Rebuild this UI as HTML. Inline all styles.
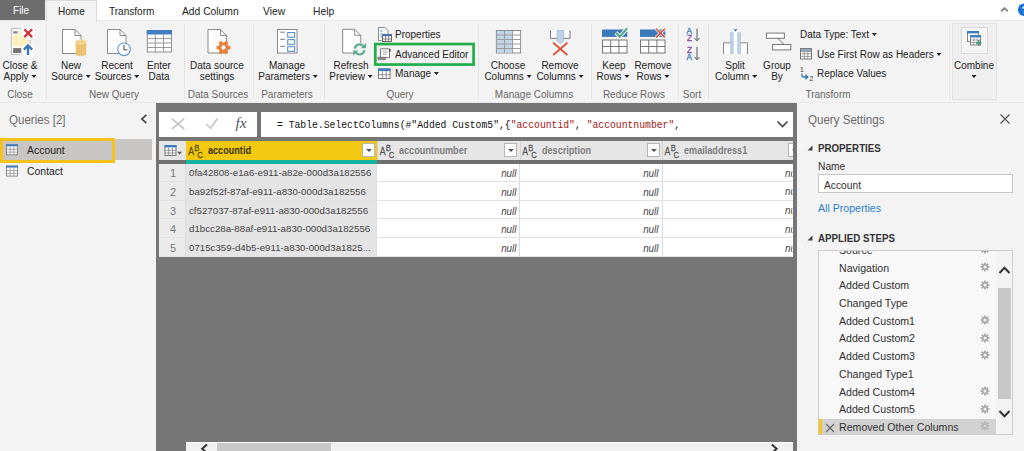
<!DOCTYPE html>
<html>
<head>
<meta charset="utf-8">
<style>
*{box-sizing:border-box;margin:0;padding:0}
html,body{width:1024px;height:451px;overflow:hidden;background:#fff}
body{font-family:"Liberation Sans",sans-serif;font-size:11px;color:#333;position:relative}
.a{position:absolute}
.t{position:absolute;white-space:nowrap;line-height:12px}
.c{text-align:center}
/* tabs */
#tabs{left:0;top:0;width:1024px;height:20px;background:#fff}
#file{left:0;top:0;width:45px;height:20px;background:#6d6d6d;color:#fff;text-align:center;line-height:21px;font-size:11px}
#home{left:46px;top:0;width:51px;height:22px;background:#f3f3f3;border:1px solid #dcdcdc;border-bottom:none;text-align:center;line-height:21px;font-size:11px;color:#222}
.tab{transform:scaleX(.999);transform-origin:left center;top:5.6px;font-size:10.05px;color:#222}
/* ribbon */
#ribbon{left:0;top:20px;width:1024px;height:82px;background:#f3f3f3;border-top:1px solid #e6e6e6}
.sep{position:absolute;top:24px;width:1px;height:75px;background:#e4e4e4}
.lbl{transform:scaleX(.999);position:absolute;white-space:nowrap;font-size:10px;line-height:12px;color:#222;text-align:center}
.grp{transform:scaleX(.999);position:absolute;white-space:nowrap;font-size:10px;line-height:12px;color:#666;text-align:center;top:89.3px}
.dd{display:inline-block;width:5px;height:3px;background:#222;clip-path:polygon(0 0,100% 0,50% 100%);vertical-align:middle;margin-left:2.8px;position:relative;top:-.8px}
/* panels */
#below{left:0;top:101px;width:1024px;height:350px;background:#f3f3f3}
#main{left:156px;top:103px;width:641px;height:348px;background:#767676}

/* left panel */
.ptitle{font-size:12px;color:#6a6a6a;line-height:14px;transform:scaleX(.964);transform-origin:left center}
.q{font-size:10.45px;color:#222;transform:scaleX(.999);transform-origin:left center}
/* grid */
.hd{position:absolute;top:141px;height:19px;background:#e6e6e6}
.hb{position:absolute;top:160px;height:4px;background:#707070}
.ht{position:absolute;top:145px;font-size:10px;line-height:12px;font-weight:bold;color:#7d7d7d;white-space:nowrap;transform:scaleX(.91);transform-origin:left center}
.ddb{position:absolute;top:143px;width:13px;height:14px;background:#fff;border:1px solid #b5b5b5}
.ddb:after{content:"";position:absolute;left:3px;top:5px;border-left:3px solid transparent;border-right:3px solid transparent;border-top:3px solid #555}
.abc{position:absolute;top:142px;width:16px;height:16px}
.row{position:absolute;left:159px;width:634px;background:#fff;border-bottom:1px solid #e2e2e2}
.cell{position:absolute;top:0;bottom:0;border-right:1px solid #dcdcdc}
.nul{position:absolute;font-style:italic;font-size:10.5px;line-height:12px;color:#444;transform:scaleX(.93);transform-origin:right center}
.gid{position:absolute;font-size:9.72px;line-height:12px;color:#444;white-space:nowrap;transform:scaleX(.999);transform-origin:left center}
.rn{position:absolute;font-size:11px;line-height:12px;color:#777;width:26px;text-align:center;left:160px}
/* right */
.h2{font-size:11px;font-weight:bold;color:#333;line-height:14px;transform:scaleX(.886);transform-origin:left center}
.st{font-size:10.4px;color:#303030;line-height:12px;transform:scaleX(.985);transform-origin:left center}
.s2{transform:scaleX(1.02)}
</style>
</head>
<body>
<div id="tabs" class="a"></div>
<div class="a" style="left:0;top:0;width:47px;height:22px;background:#f3f3f3"></div><div id="file" class="a"></div><div class="t tab" style="left:12.7px;color:#fff;top:4.6px">File</div>
<div id="ribbon" class="a"></div>
<div id="home" class="a"></div><div class="t tab" style="left:58.2px">Home</div>
<div class="t tab" style="left:109px">Transform</div>
<div class="t tab" style="left:182px;font-size:10.3px">Add Column</div>
<div class="t tab" style="left:263px;font-size:10.3px">View</div>
<div class="t tab" style="left:313px;font-size:10.3px">Help</div>


<!-- ===== RIBBON CONTENT ===== -->
<div class="sep" style="left:46px"></div>
<div class="sep" style="left:184px"></div>
<div class="sep" style="left:253px"></div>
<div class="sep" style="left:324px"></div>
<div class="sep" style="left:478px"></div>
<div class="sep" style="left:591px"></div>
<div class="sep" style="left:678px"></div>
<div class="sep" style="left:708px"></div>
<div class="sep" style="left:949px"></div>

<!-- Close & Apply -->
<div class="lbl" style="left:-10px;width:60px;top:60.2px">Close &amp;</div>
<div class="lbl" style="left:-10px;width:60px;top:71px">Apply<i class="dd"></i></div>
<div class="grp" style="left:-10px;width:60px">Close</div>
<!-- New Source -->
<div class="lbl" style="left:41px;width:60px;top:60.2px">New</div>
<div class="lbl" style="left:41px;width:60px;top:71px">Source<i class="dd"></i></div>
<!-- Recent Sources -->
<div class="lbl" style="left:87px;width:60px;top:60.2px">Recent</div>
<div class="lbl" style="left:87px;width:60px;top:71px">Sources<i class="dd"></i></div>
<!-- Enter Data -->
<div class="lbl" style="left:129px;width:60px;top:60.2px">Enter</div>
<div class="lbl" style="left:129px;width:60px;top:71px">Data</div>
<div class="grp" style="left:74px;width:80px">New Query</div>
<!-- Data source settings -->
<div class="lbl" style="left:177px;width:80px;top:60.2px">Data source</div>
<div class="lbl" style="left:177px;width:80px;top:71px">settings</div>
<div class="grp" style="left:178px;width:80px">Data Sources</div>
<!-- Manage Parameters -->
<div class="lbl" style="left:247px;width:80px;top:60.2px">Manage</div>
<div class="lbl" style="left:248px;width:80px;top:71px">Parameters<i class="dd"></i></div>
<div class="grp" style="left:247px;width:80px">Parameters</div>
<!-- Refresh Preview -->
<div class="lbl" style="left:321px;width:60px;top:60.2px">Refresh</div>
<div class="lbl" style="left:321px;width:60px;top:71px">Preview<i class="dd"></i></div>
<!-- Query small buttons -->
<div class="lbl" style="left:395px;top:29px;text-align:left">Properties</div>
<svg class="a" style="left:370px;top:40px" width="110" height="30" viewBox="370 40 110 30"><rect x="375.3" y="44.05" width="98.3" height="20.5" fill="none" stroke="#22ad4a" stroke-width="2.7"/></svg>
<div class="lbl" style="left:395px;top:49px;text-align:left">Advanced Editor</div>
<div class="lbl" style="left:395px;top:68px;text-align:left">Manage<i class="dd"></i></div>
<div class="grp" style="left:360px;width:80px">Query</div>
<!-- Choose Columns -->
<div class="lbl" style="left:478px;width:60px;top:60.2px">Choose</div>
<div class="lbl" style="left:478px;width:60px;top:71px">Columns<i class="dd"></i></div>
<div class="lbl" style="left:530px;width:60px;top:60.2px">Remove</div>
<div class="lbl" style="left:530px;width:60px;top:71px">Columns<i class="dd"></i></div>
<div class="grp" style="left:484px;width:100px">Manage Columns</div>
<!-- Keep / Remove Rows -->
<div class="lbl" style="left:584px;width:60px;top:60.2px">Keep</div>
<div class="lbl" style="left:583px;width:60px;top:71px">Rows<i class="dd"></i></div>
<div class="lbl" style="left:623px;width:60px;top:60.2px">Remove</div>
<div class="lbl" style="left:623px;width:60px;top:71px">Rows<i class="dd"></i></div>
<div class="grp" style="left:594px;width:80px">Reduce Rows</div>
<!-- Sort -->
<div class="grp" style="left:672px;width:40px">Sort</div>
<!-- Split / Group -->
<div class="lbl" style="left:705px;width:60px;top:60.2px">Split</div>
<div class="lbl" style="left:706px;width:60px;top:71px">Column<i class="dd"></i></div>
<div class="lbl" style="left:747px;width:60px;top:60.2px">Group</div>
<div class="lbl" style="left:747px;width:60px;top:71px">By</div>
<div class="lbl" style="left:800px;top:29px;text-align:left">Data Type: Text<i class="dd"></i></div>
<div class="lbl" style="left:817px;top:49px;text-align:left">Use First Row as Headers<i class="dd"></i></div>
<div class="lbl" style="left:817px;top:68px;text-align:left">Replace Values</div>
<div class="grp" style="left:788px;width:80px">Transform</div>
<!-- Combine -->
<div class="a" style="left:952px;top:23px;width:45px;height:77px;background:#efefef;border:1px solid #e2e2e2"></div>
<div class="a" style="left:961px;top:27px;width:27px;height:27px;background:#f5f5f5;border:1px solid #dadada"></div>
<div class="lbl" style="left:944px;width:60px;top:60.2px">Combine</div>
<div class="lbl" style="left:944px;width:60px;top:71px"><i class="dd" style="margin-left:0"></i></div>

<svg class="a" style="left:0;top:0" width="1024" height="110" viewBox="0 0 1024 110">
<g>
<rect x="11.5" y="28.5" width="10" height="26" fill="#fff"/>
<rect x="22" y="28" width="11.5" height="10.5" fill="#fff" opacity=".65"/><rect x="22" y="44" width="11.5" height="11" fill="#fff" opacity=".65"/>
<path d="M21.3 28.4 H11.4 V54.6 H21.3" fill="none" stroke="#b3b3b3" stroke-width=".9"/>
<rect x="13.1" y="34.9" width="5.1" height="11.7" fill="#fdeeb4"/>
<path d="M18.9 31.2 H21.6 V37.2 L29.1 40.2 V42.1 L21.6 46.6 H18.9 Z" fill="#fdf0bd"/>
<rect x="13.1" y="31.2" width="4.7" height="2.4" fill="#8c8c8c"/>
<rect x="13.1" y="48.1" width="8.1" height="4.9" fill="#757575"/>
<path d="M30.2 40.2 V43.6" stroke="#9a9a9a" stroke-width=".7"/>
<path d="M24.3 29.3 L32.1 37.1 M32.1 29.3 L24.3 37.1" stroke="#cb3234" stroke-width="2.3" fill="none"/>
<path d="M28 54.9 V46 M23.9 49.6 L28 45.4 L32.1 49.6" stroke="#3977b6" stroke-width="2.3" fill="none"/>
</g>
<path d="M62.5 29.5 H75.0 L81.0 35.5 V53.5 H62.5 Z" fill="#fff" stroke="#8a8a8a" stroke-width="1"/><path d="M75.0 29.5 V35.5 H81.0" fill="none" stroke="#8a8a8a" stroke-width="1"/><g><rect x="75.6" y="41.8" width="10.6" height="12.6" fill="#ecc271"/><ellipse cx="80.9" cy="41.8" rx="5.3" ry="2" fill="#f1cf8a" stroke="#f6e0b0" stroke-width=".8"/><ellipse cx="80.9" cy="54.2" rx="5.3" ry="1.5" fill="#ecc271"/></g>
<path d="M107.5 29.5 H120.0 L126.0 35.5 V53.5 H107.5 Z" fill="#fff" stroke="#8a8a8a" stroke-width="1"/><path d="M120.0 29.5 V35.5 H126.0" fill="none" stroke="#8a8a8a" stroke-width="1"/><g><circle cx="124" cy="49.3" r="6.3" fill="#fff" stroke="#6b98cf" stroke-width="1.1"/><path d="M124 45 V49.8 H127.5" stroke="#555" stroke-width="1.1" fill="none"/></g>
<g><rect x="147.3" y="30.5" width="24.2" height="21.5" fill="#fff" stroke="#8f8f8f" stroke-width="1"/><rect x="146.8" y="30" width="25.2" height="4.5" fill="#427fc2"/>
<path d="M147.3 38.6 H171.5 M147.3 43 H171.5 M147.3 47.5 H171.5 M155.3 34 V52 M163.5 34 V52" stroke="#9a9a9a" stroke-width="1" fill="none"/></g>
<path d="M208 29.5 H220.5 L226.5 35.5 V53.0 H208 Z" fill="#fff" stroke="#8a8a8a" stroke-width="1"/><path d="M220.5 29.5 V35.5 H226.5" fill="none" stroke="#8a8a8a" stroke-width="1"/><g transform="translate(223.5 47.6) rotate(90) scale(.97)"><g fill="#e6813a">
<rect x="-1.8" y="-7.2" width="3.6" height="14.4"/><rect x="-1.8" y="-7.2" width="3.6" height="14.4" transform="rotate(60)"/><rect x="-1.8" y="-7.2" width="3.6" height="14.4" transform="rotate(120)"/>
<circle r="5.2"/></g><circle r="2.3" fill="#f3f3f3"/></g>
<g><rect x="277.5" y="29.5" width="19.5" height="23.5" fill="#fff" stroke="#8a8a8a"/>
<g fill="#fff" stroke="#4b86c6" stroke-width="1"><rect x="287.7" y="32.6" width="7" height="4.6"/><rect x="287.7" y="39.7" width="7" height="4.6"/><rect x="287.7" y="46.7" width="7" height="4.6"/></g>
<path d="M280.3 32.2 H284.8 M280.3 39.3 H284.8 M280.3 46.4 H284.8" stroke="#777" stroke-width="1"/></g>
<path d="M342.7 29.3 H354.7 L360.7 35.3 V53 H342.7 Z" fill="#fff" stroke="#8a8a8a" stroke-width="1"/><path d="M354.7 29.3 V35.3 H360.7" fill="none" stroke="#8a8a8a" stroke-width="1"/>
<circle cx="359.6" cy="49.4" r="6.6" fill="#f3f3f3"/>
<g fill="none" stroke="#5cab8c" stroke-width="2.1"><path d="M354.9 48.6 A4.7 4.7 0 0 1 363.3 46.2"/><path d="M364.3 50.2 A4.7 4.7 0 0 1 355.9 52.6"/></g>
<path d="M366 43 V48.2 H360.8 Z" fill="#5cab8c"/><path d="M353.2 55.8 V50.6 H358.4 Z" fill="#5cab8c"/>
<g><path d="M378.5 27.5 H385 L388 30.5 V34 M378.5 27.5 V40.5 H381.5" fill="#fff" stroke="#8a8a8a" stroke-width="1"/>
<path d="M380.5 31 H382 M380.5 34 H382 M380.5 37 H382" stroke="#4b86c6" stroke-width="1.2"/>
<rect x="382.5" y="34.5" width="9" height="7" fill="#fff" stroke="#6b6b6b" stroke-width="1"/><rect x="382" y="34" width="10" height="2.2" fill="#4b6fa8"/>
<path d="M385.5 36 V41.5 M388.5 36 V41.5 M382.5 39 H391.5" stroke="#6b6b6b" stroke-width=".8"/></g>
<g><path d="M380.5 48.8 H389.5 V57.6 H380.5 Z" fill="#fff" stroke="#7a7a7a" stroke-width="1"/>
<path d="M377.8 57.2 H385.4 V59.7 H378.6 Q377.6 59.5 377.8 57.2 Z" fill="#8c8c8c" stroke="#6f6f6f" stroke-width=".7"/>
<path d="M382.6 51 H387.6 M382.6 52.8 H387.6 M382.6 54.6 H386.4" stroke="#b0b0b0" stroke-width=".9"/><rect x="389" y="49.2" width="1.7" height="2.2" fill="#444"/></g>
<g><rect x="378.5" y="69" width="11.5" height="9.5" fill="#fff" stroke="#777" stroke-width="1"/><rect x="378" y="68.5" width="12.5" height="2.6" fill="#3d7dc0"/>
<path d="M382.3 71 V78.5 M386.2 71 V78.5 M378.5 74.7 H390" stroke="#888" stroke-width=".9"/></g>
<g><rect x="496.4" y="30.5" width="24.2" height="22.5" fill="#fff" stroke="#8a8a8a"/><rect x="496.9" y="31" width="15.6" height="21.5" fill="#c3d5eb"/>
<path d="M496.4 35 H520.6 M496.4 39.5 H520.6 M496.4 44 H520.6 M496.4 48.5 H520.6 M504.5 30.5 V53 M512.5 30.5 V53" stroke="#9a9a9a" stroke-width="1" fill="none"/></g>
<g><path d="M550.5 30.5 H557 V38.4 H550.5 Z M563.9 30.5 H570 V38.4 H563.9 Z" fill="#fff" stroke="none"/>
<path d="M550.5 30.5 V38.4 H557 M563.9 38.4 H570 V30.5" fill="none" stroke="#777" stroke-width="1"/>
<path d="M557 30.5 H563.9 V40.5 L560.4 43.6 L557 40.5 Z" fill="#bed1e9" stroke="#9db5d3" stroke-width=".7"/>
<path d="M553.2 42.8 L567.4 55 M567.4 42.8 L553.2 55" stroke="#d9553a" stroke-width="1.8" fill="none"/></g>
<g><rect x="602" y="29.5" width="25.3" height="7.4" fill="#3b79b9"/><rect x="602.5" y="40" width="24.5" height="13" fill="#fff" stroke="#777" stroke-width="1"/><path d="M602.5 46.5 H627.0 M610.7 40 V53 M618.9 40 V53" stroke="#777" stroke-width="1" fill="none"/><path d="M615.8 32.6 L619.8 36.7 L627.3 28.2" stroke="#fff" stroke-width="3.8" fill="none"/><path d="M615.8 32.6 L619.8 36.7 L627.3 28.2" stroke="#4ea58a" stroke-width="2" fill="none"/></g>
<g><rect x="640" y="29.5" width="25.3" height="7.4" fill="#3b79b9"/><rect x="640.5" y="40" width="24.5" height="13" fill="#fff" stroke="#777" stroke-width="1"/><path d="M640.5 46.5 H665.0 M648.7 40 V53 M656.9 40 V53" stroke="#777" stroke-width="1" fill="none"/><path d="M656 28.8 L664.8 37.4 M664.8 28.8 L656 37.4" stroke="#fff" stroke-width="3.2" fill="none" opacity=".8"/><path d="M656 28.8 L664.8 37.4 M664.8 28.8 L656 37.4" stroke="#d4573c" stroke-width="1.6" fill="none"/></g>
<g font-family="Liberation Sans" font-size="8.3" stroke-width=".3"><text x="686.6" y="34" fill="#3b79b9" stroke="#3b79b9">A</text><text x="686.9" y="41.2" fill="#8b4fa8" stroke="#8b4fa8">Z</text>
<text x="686.9" y="53.2" fill="#8b4fa8" stroke="#8b4fa8">Z</text><text x="686.6" y="60.3" fill="#3b79b9" stroke="#3b79b9">A</text></g>
<path d="M697 28.5 V40.5 M694.5 38 L697 40.8 L699.5 38" stroke="#555" stroke-width="1" fill="none"/>
<path d="M697 47 V59.5 M694.5 57 L697 59.8 L699.5 57" stroke="#555" stroke-width="1" fill="none"/>
<g><path d="M723.5 54 V42.8 H730.5 V54 Z M740.5 54 V42.8 H747.5 V54 Z" fill="#fff"/>
<rect x="730.6" y="32.3" width="3.3" height="21.7" fill="#bdd1ea"/><rect x="733.9" y="32.3" width="3.2" height="21.7" fill="#fff"/><rect x="737.1" y="32.3" width="3.4" height="21.7" fill="#bdd1ea"/>
<path d="M723.5 54 V42.8 H730.5 M740.5 42.8 H747.5 V54" fill="none" stroke="#858585" stroke-width="1"/>
<path d="M730.6 54 V32.3 M740.5 54 V32.3" fill="none" stroke="#a9b9cf" stroke-width=".6"/>
<path d="M733.3 29.2 H737.6 L735.45 31.5 Z" fill="#3b79b9"/></g>
<g fill="#fff" stroke="#777" stroke-width="1"><rect x="766.4" y="33.1" width="18" height="5.2"/><rect x="772.6" y="44.5" width="18.2" height="5.4"/><path d="M777.6 38.3 L784.2 44.5" fill="none"/></g>
<g><rect x="800.5" y="48.6" width="11" height="10.4" fill="#fff" stroke="#777" stroke-width="1"/><rect x="800.5" y="48.6" width="11" height="2.6" fill="#8fa9c9" stroke="#777" stroke-width=".8"/>
<path d="M804.2 51 V59 M807.8 51 V59 M800.5 53.7 H811.5 M800.5 56.4 H811.5" stroke="#888" stroke-width=".8"/></g>
<g font-family="Liberation Sans" font-size="7.6" fill="#444"><text x="799.8" y="72.2">1</text><text x="809.3" y="80.6">2</text></g>
<path d="M801.8 73.4 Q801.8 77 804 77 H807.6 M805.4 74.8 L807.8 77 L805.4 79.2" stroke="#2f75b5" stroke-width="1.3" fill="none"/>
<g><rect x="967.5" y="31.5" width="11" height="10" fill="#fff" stroke="#777" stroke-width=".9"/><rect x="967.1" y="31" width="11.8" height="2.4" fill="#3d7dc0"/>
<rect x="970.5" y="35.5" width="10" height="9.5" fill="#fff" stroke="#777" stroke-width=".9"/><rect x="970.1" y="35" width="10.8" height="2.4" fill="#3d7dc0"/>
<path d="M973.8 37.4 V45 M977.2 37.4 V45 M970.5 40 H980.5 M970.5 42.5 H980.5" stroke="#888" stroke-width=".7"/>
<path d="M978.7 40.1 V45.5 M976 42.8 H981.4" stroke="#3f9e7a" stroke-width="1.7"/></g>
<path d="M1001.2 11.4 L1004.5 8 L1007.8 11.4" fill="none" stroke="#858585" stroke-width="1.9"/><circle cx="1024.2" cy="9.8" r="6.3" fill="#1b72cf"/><text x="1021.4" y="13.8" font-family="Liberation Sans" font-weight="bold" font-size="11" fill="#fff">?</text>
</svg>
<div id="below" class="a"></div>
<div class="a" style="left:0;top:102px;width:1024px;height:1px;background:#e9e9e9"></div>
<div id="main" class="a"></div>


<!-- ===== LEFT PANEL ===== -->
<div class="t ptitle" style="left:9px;top:113px">Queries [2]</div>
<svg class="a" style="left:139px;top:112px" width="10" height="14" viewBox="0 0 10 14"><path d="M7.3 2.8 L2.9 7 L7.3 11.2" fill="none" stroke="#484848" stroke-width="1.7"/></svg>
<div class="a" style="left:0;top:139px;width:152px;height:21px;background:#c8c6c4"></div>
<div class="a" style="left:0;top:138px;width:115px;height:25px;border:3px solid #f8c21c;border-left-width:3px;background:#c8c6c4"></div>
<div class="t q" style="left:27px;top:145px">Account</div>
<div class="t q" style="left:27px;top:166px">Contact</div>

<!-- ===== MAIN ===== -->
<div class="a" style="left:159px;top:112px;width:98px;height:25px;background:#fff"></div>
<div class="a" style="left:261px;top:112px;width:532px;height:25px;background:#fff"></div>
<div class="t" style="left:277px;top:120px;font-family:'Liberation Mono',monospace;font-size:9.74px;color:#111;transform:scaleY(1.17);transform-origin:left center">= Table.SelectColumns(#"Added Custom5",{<span style="color:#a31515">"accountid"</span>, <span style="color:#a31515">"accountnumber"</span>,</div>
<svg class="a" style="left:776px;top:120px" width="13" height="9" viewBox="0 0 13 9"><path d="M1.5 1.5 L6.5 6.5 L11.5 1.5" fill="none" stroke="#444" stroke-width="1.6"/></svg>

<!-- header -->
<div class="hd" style="left:159px;width:634px"></div>
<div class="hb" style="left:159px;width:634px"></div>
<div class="hd" style="left:186px;width:191px;background:#f2c811"></div>
<div class="hb" style="left:186px;width:191px;background:#15b3a0"></div>
<div class="a" style="left:377px;top:141px;width:1px;height:19px;background:#cfcfcf"></div>
<div class="a" style="left:519.5px;top:141px;width:1px;height:19px;background:#d4d4d4"></div>
<div class="a" style="left:662px;top:141px;width:1px;height:19px;background:#d4d4d4"></div>
<div class="ht" style="left:207.7px;color:#3a3204">accountid</div>
<div class="ht" style="left:399px">accountnumber</div>
<div class="ht" style="left:541.7px">description</div>
<div class="ht" style="left:684px">emailaddress1</div>
<div class="ddb" style="left:362px"></div>
<div class="ddb" style="left:504px"></div>
<div class="ddb" style="left:646.5px"></div>
<div class="ddb" style="left:788px;width:5px;border-right:none;overflow:hidden"></div>
<!-- rows -->
<div class="row" style="top:164px;height:18px"><div class="cell" style="left:0;width:27px;background:#ebebeb"></div><div class="cell" style="left:27px;width:191px;background:#e4e4e4"></div><div class="cell" style="left:218px;width:143px"></div><div class="cell" style="left:361px;width:143px"></div></div>
<div class="rn" style="top:167px">1</div><div class="gid" style="left:189px;top:167px">0fa42808-e1a6-e911-a82e-000d3a182556</div><div class="nul" style="right:507.5px;top:167px">null</div><div class="nul" style="right:365.5px;top:167px">null</div><div class="nul" style="left:785px;top:167px;transform-origin:left center;width:8px;overflow:hidden">null</div>
<div class="row" style="top:182px;height:19px"><div class="cell" style="left:0;width:27px;background:#ebebeb"></div><div class="cell" style="left:27px;width:191px;background:#e4e4e4"></div><div class="cell" style="left:218px;width:143px"></div><div class="cell" style="left:361px;width:143px"></div></div>
<div class="rn" style="top:185.6px">2</div><div class="gid" style="left:189px;top:185.6px">ba92f52f-87af-e911-a830-000d3a182556</div><div class="nul" style="right:507.5px;top:185.6px">null</div><div class="nul" style="right:365.5px;top:185.6px">null</div><div class="nul" style="left:785px;top:185px;transform-origin:left center;width:8px;overflow:hidden">null</div>
<div class="row" style="top:201px;height:18px"><div class="cell" style="left:0;width:27px;background:#ebebeb"></div><div class="cell" style="left:27px;width:191px;background:#e4e4e4"></div><div class="cell" style="left:218px;width:143px"></div><div class="cell" style="left:361px;width:143px"></div></div>
<div class="rn" style="top:204.5px">3</div><div class="gid" style="left:189px;top:204.5px">cf527037-87af-e911-a830-000d3a182556</div><div class="nul" style="right:507.5px;top:204.5px">null</div><div class="nul" style="right:365.5px;top:204.5px">null</div><div class="nul" style="left:785px;top:204px;transform-origin:left center;width:8px;overflow:hidden">null</div>
<div class="row" style="top:219px;height:19px"><div class="cell" style="left:0;width:27px;background:#ebebeb"></div><div class="cell" style="left:27px;width:191px;background:#e4e4e4"></div><div class="cell" style="left:218px;width:143px"></div><div class="cell" style="left:361px;width:143px"></div></div>
<div class="rn" style="top:223px">4</div><div class="gid" style="left:189px;top:223px">d1bcc28a-88af-e911-a830-000d3a182556</div><div class="nul" style="right:507.5px;top:223px">null</div><div class="nul" style="right:365.5px;top:223px">null</div><div class="nul" style="left:785px;top:223px;transform-origin:left center;width:8px;overflow:hidden">null</div>
<div class="row" style="top:238px;height:19px"><div class="cell" style="left:0;width:27px;background:#ebebeb"></div><div class="cell" style="left:27px;width:191px;background:#e4e4e4"></div><div class="cell" style="left:218px;width:143px"></div><div class="cell" style="left:361px;width:143px"></div></div>
<div class="rn" style="top:241.7px">5</div><div class="gid" style="left:189px;top:241.7px">0715c359-d4b5-e911-a830-000d3a1825...</div><div class="nul" style="right:507.5px;top:241.7px">null</div><div class="nul" style="right:365.5px;top:241.7px">null</div><div class="nul" style="left:785px;top:242px;transform-origin:left center;width:8px;overflow:hidden">null</div>

<svg class="a" style="left:0;top:101px" width="1024" height="350" viewBox="0 101 1024 350">
<rect x="6.5" y="144.8" width="11" height="10" fill="#fff" stroke="#8a8a8a" stroke-width="1"/><rect x="6" y="144.3" width="12" height="2" fill="#3d7dc0"/><path d="M10.2 146.3 V154.8 M13.9 146.3 V154.8 M6.5 149.3 H17.5 M6.5 152.10000000000002 H17.5" stroke="#9a9a9a" stroke-width=".9" fill="none"/><rect x="6.5" y="166.1" width="11" height="10" fill="#fff" stroke="#8a8a8a" stroke-width="1"/><rect x="6" y="165.6" width="12" height="2" fill="#3d7dc0"/><path d="M10.2 167.6 V176.1 M13.9 167.6 V176.1 M6.5 170.6 H17.5 M6.5 173.4 H17.5" stroke="#9a9a9a" stroke-width=".9" fill="none"/>
<path d="M171.8 118.6 L184.2 129 M184.2 118.6 L171.8 129" stroke="#c6c6c6" stroke-width="1.7" fill="none"/>
<path d="M206.2 124 L210.5 128.3 L217.5 118.5" stroke="#c6c6c6" stroke-width="1.7" fill="none"/>
<text x="235.5" y="128" font-family="Liberation Serif" font-style="italic" font-size="15.5" fill="#555">fx</text>
<rect x="165" y="145.5" width="11" height="10" fill="#fff" stroke="#777" stroke-width="1"/><rect x="164.5" y="145" width="12" height="2.4" fill="#3d7dc0"/><path d="M168.7 147.4 V155.5 M172.4 147.4 V155.5 M165 150.3 H176 M165 153 H176" stroke="#8a8a8a" stroke-width=".9" fill="none"/><path d="M177.2 151.8 H182 L179.6 154.6 Z" fill="#555"/>
<g font-family="Liberation Sans" fill="#5a4c05" stroke="#5a4c05" stroke-width=".25"><text transform="translate(188.2 155.1) scale(.82 1)" font-size="10.6">A</text><text transform="translate(194.3 151.1) scale(.8 1)" font-size="9.6">B</text><text transform="translate(197.2 158.2) scale(.8 1)" font-size="9.6">C</text></g><g font-family="Liberation Sans" fill="#555" stroke="#555" stroke-width=".25"><text transform="translate(379.7 155.1) scale(.82 1)" font-size="10.6">A</text><text transform="translate(385.8 151.1) scale(.8 1)" font-size="9.6">B</text><text transform="translate(388.7 158.2) scale(.8 1)" font-size="9.6">C</text></g><g font-family="Liberation Sans" fill="#555" stroke="#555" stroke-width=".25"><text transform="translate(522.2 155.1) scale(.82 1)" font-size="10.6">A</text><text transform="translate(528.3 151.1) scale(.8 1)" font-size="9.6">B</text><text transform="translate(531.2 158.2) scale(.8 1)" font-size="9.6">C</text></g><g font-family="Liberation Sans" fill="#555" stroke="#555" stroke-width=".25"><text transform="translate(664.6 155.1) scale(.82 1)" font-size="10.6">A</text><text transform="translate(670.7 151.1) scale(.8 1)" font-size="9.6">B</text><text transform="translate(673.6 158.2) scale(.8 1)" font-size="9.6">C</text></g>
</svg>
<!-- bottom scrollbar -->
<div class="a" style="left:186px;top:442px;width:607px;height:9px;background:#f1f1f1;border-top:1px solid #fafafa"></div>
<div class="a" style="left:217px;top:443px;width:114px;height:8px;background:#c8c8c8"></div>
<svg class="a" style="left:198px;top:442px" width="14" height="9" viewBox="198 442 14 9"><path d="M207 444.4 L202.2 448.8 L207 453.2" fill="none" stroke="#333" stroke-width="2"/></svg>
<svg class="a" style="left:768px;top:442px" width="14" height="9" viewBox="768 442 14 9"><path d="M771.8 444.4 L776.6 448.8 L771.8 453.2" fill="none" stroke="#333" stroke-width="2"/></svg>

<!-- ===== RIGHT PANEL ===== -->
<div class="t ptitle" style="left:808px;top:113px">Query Settings</div>
<svg class="a" style="left:999px;top:113px" width="12" height="12" viewBox="0 0 12 12"><path d="M1.5 1.5 L10.5 10.5 M10.5 1.5 L1.5 10.5" fill="none" stroke="#555" stroke-width="1.2"/></svg>
<svg class="a" style="left:807px;top:145px" width="6" height="6" viewBox="0 0 6 6"><path d="M5.5 0.5 L5.5 5.5 L0.5 5.5 Z" fill="#444"/></svg>
<div class="t h2" style="left:818px;top:141px">PROPERTIES</div>
<div class="t st" style="left:818px;top:161px">Name</div>
<div class="a" style="left:818px;top:174px;width:195px;height:19px;background:#fff;border:1px solid #c6c6c6"></div>
<div class="t st" style="left:824px;top:179.7px">Account</div>
<div class="t st" style="left:818px;top:203px;color:#2b80d0;transform:scaleX(1.02)">All Properties</div>
<svg class="a" style="left:807px;top:235px" width="6" height="6" viewBox="0 0 6 6"><path d="M5.5 0.5 L5.5 5.5 L0.5 5.5 Z" fill="#444"/></svg>
<div class="t h2" style="left:818px;top:231px">APPLIED STEPS</div>
<div class="a" style="left:818px;top:250px;width:195px;height:185px;background:#f8f8f8;border:1px solid #cdcdcd;overflow:hidden" id="steps"><div class="a" style="left:0;top:168px;width:177px;height:16px;background:#d2d2d2"></div><div class="a" style="left:0;top:168px;width:2.5px;height:16px;background:#f2c811"></div><svg class="a" style="left:6px;top:172px" width="10" height="10" viewBox="0 0 10 10"><path d="M1 1 L9 9 M9 1 L1 9" stroke="#666" stroke-width="1.2" fill="none"/></svg><div class="t st s2" style="left:20px;top:-6.4px">Source</div><svg class="a" style="left:160.5px;top:-7.1px" width="10" height="10" viewBox="-5 -5 10 10"><g stroke="#a3a3a3" fill="none"><circle r="2.3" stroke-width="1.5"/><path d="M0 -4.6V-3M0 3V4.6M-4.6 0H-3M3 0H4.6M-3.25 -3.25L-2.1 -2.1M2.1 2.1L3.25 3.25M3.25 -3.25L2.1 -2.1M-2.1 2.1L-3.25 3.25" stroke-width="1.7"/></g></svg><div class="t st s2" style="left:20px;top:11.6px">Navigation</div><svg class="a" style="left:160.5px;top:10.9px" width="10" height="10" viewBox="-5 -5 10 10"><g stroke="#a3a3a3" fill="none"><circle r="2.3" stroke-width="1.5"/><path d="M0 -4.6V-3M0 3V4.6M-4.6 0H-3M3 0H4.6M-3.25 -3.25L-2.1 -2.1M2.1 2.1L3.25 3.25M3.25 -3.25L2.1 -2.1M-2.1 2.1L-3.25 3.25" stroke-width="1.7"/></g></svg><div class="t st s2" style="left:20px;top:29.3px">Added Custom</div><svg class="a" style="left:160.5px;top:28.6px" width="10" height="10" viewBox="-5 -5 10 10"><g stroke="#a3a3a3" fill="none"><circle r="2.3" stroke-width="1.5"/><path d="M0 -4.6V-3M0 3V4.6M-4.6 0H-3M3 0H4.6M-3.25 -3.25L-2.1 -2.1M2.1 2.1L3.25 3.25M3.25 -3.25L2.1 -2.1M-2.1 2.1L-3.25 3.25" stroke-width="1.7"/></g></svg><div class="t st s2" style="left:20px;top:47px">Changed Type</div><div class="t st s2" style="left:20px;top:64.7px">Added Custom1</div><svg class="a" style="left:160.5px;top:64.0px" width="10" height="10" viewBox="-5 -5 10 10"><g stroke="#a3a3a3" fill="none"><circle r="2.3" stroke-width="1.5"/><path d="M0 -4.6V-3M0 3V4.6M-4.6 0H-3M3 0H4.6M-3.25 -3.25L-2.1 -2.1M2.1 2.1L3.25 3.25M3.25 -3.25L2.1 -2.1M-2.1 2.1L-3.25 3.25" stroke-width="1.7"/></g></svg><div class="t st s2" style="left:20px;top:82.4px">Added Custom2</div><svg class="a" style="left:160.5px;top:81.7px" width="10" height="10" viewBox="-5 -5 10 10"><g stroke="#a3a3a3" fill="none"><circle r="2.3" stroke-width="1.5"/><path d="M0 -4.6V-3M0 3V4.6M-4.6 0H-3M3 0H4.6M-3.25 -3.25L-2.1 -2.1M2.1 2.1L3.25 3.25M3.25 -3.25L2.1 -2.1M-2.1 2.1L-3.25 3.25" stroke-width="1.7"/></g></svg><div class="t st s2" style="left:20px;top:100.1px">Added Custom3</div><svg class="a" style="left:160.5px;top:99.4px" width="10" height="10" viewBox="-5 -5 10 10"><g stroke="#a3a3a3" fill="none"><circle r="2.3" stroke-width="1.5"/><path d="M0 -4.6V-3M0 3V4.6M-4.6 0H-3M3 0H4.6M-3.25 -3.25L-2.1 -2.1M2.1 2.1L3.25 3.25M3.25 -3.25L2.1 -2.1M-2.1 2.1L-3.25 3.25" stroke-width="1.7"/></g></svg><div class="t st s2" style="left:20px;top:117.9px">Changed Type1</div><div class="t st s2" style="left:20px;top:135.6px">Added Custom4</div><svg class="a" style="left:160.5px;top:134.9px" width="10" height="10" viewBox="-5 -5 10 10"><g stroke="#a3a3a3" fill="none"><circle r="2.3" stroke-width="1.5"/><path d="M0 -4.6V-3M0 3V4.6M-4.6 0H-3M3 0H4.6M-3.25 -3.25L-2.1 -2.1M2.1 2.1L3.25 3.25M3.25 -3.25L2.1 -2.1M-2.1 2.1L-3.25 3.25" stroke-width="1.7"/></g></svg><div class="t st s2" style="left:20px;top:153.3px">Added Custom5</div><svg class="a" style="left:160.5px;top:152.6px" width="10" height="10" viewBox="-5 -5 10 10"><g stroke="#a3a3a3" fill="none"><circle r="2.3" stroke-width="1.5"/><path d="M0 -4.6V-3M0 3V4.6M-4.6 0H-3M3 0H4.6M-3.25 -3.25L-2.1 -2.1M2.1 2.1L3.25 3.25M3.25 -3.25L2.1 -2.1M-2.1 2.1L-3.25 3.25" stroke-width="1.7"/></g></svg><div class="t st s2" style="left:20px;top:171px">Removed Other Columns</div><svg class="a" style="left:160.5px;top:170.3px" width="10" height="10" viewBox="-5 -5 10 10"><g stroke="#b5b5b5" fill="none"><circle r="2.3" stroke-width="1.5"/><path d="M0 -4.6V-3M0 3V4.6M-4.6 0H-3M3 0H4.6M-3.25 -3.25L-2.1 -2.1M2.1 2.1L3.25 3.25M3.25 -3.25L2.1 -2.1M-2.1 2.1L-3.25 3.25" stroke-width="1.7"/></g></svg><div class="a" style="left:177px;top:0;width:17px;height:184px;background:#f3f3f3"></div><div class="a" style="left:178.5px;top:36.5px;width:13px;height:111.5px;background:#c8c8c8"></div><svg class="a" style="left:178.5px;top:13.5px" width="13" height="10" viewBox="0 0 13 10"><path d="M1.5 8 L6.5 2.8 L11.5 8" fill="none" stroke="#333" stroke-width="2"/></svg><svg class="a" style="left:178.5px;top:158px" width="13" height="10" viewBox="0 0 13 10"><path d="M1.5 2 L6.5 7.2 L11.5 2" fill="none" stroke="#333" stroke-width="2"/></svg></div>
</body>
</html>
